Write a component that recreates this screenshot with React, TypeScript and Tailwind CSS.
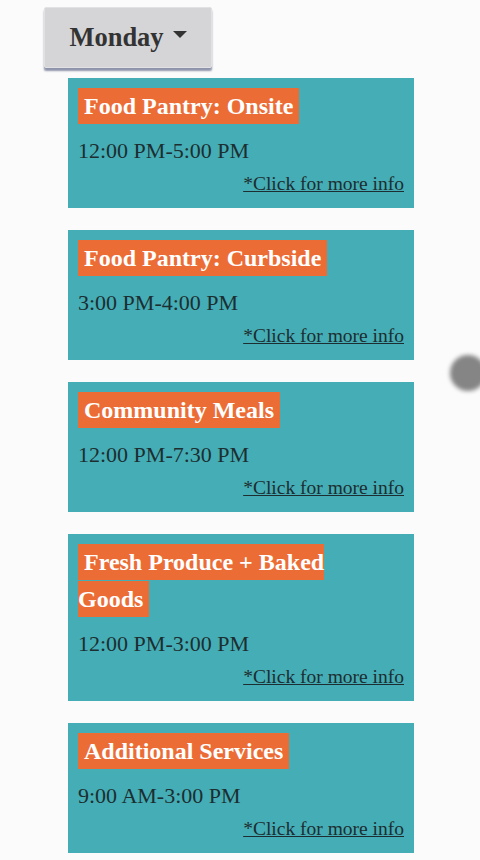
const items = [
  { title: "Food Pantry: Onsite", time: "12:00 PM-5:00 PM" },
  { title: "Food Pantry: Curbside", time: "3:00 PM-4:00 PM" },
  { title: "Community Meals", time: "12:00 PM-7:30 PM" },
  { title: "Fresh Produce + Baked Goods", time: "12:00 PM-3:00 PM" },
  { title: "Additional Services", time: "9:00 AM-3:00 PM" },
];

function Card({ title, time }: { title: string; time: string }) {
  return (
    <div className="bg-[#45adb5] w-[346px] px-[10px] pt-[10px] pb-[8px]">
      <h3 className="max-w-[290px] text-[24px] leading-[37px] font-bold text-white">
        <span className="bg-[#ec6c36] px-[6px] py-[5px]">{title}</span>
      </h3>
      <p className="mt-[11px] text-[22px] leading-[30px] text-[#1c2e31]">{time}</p>
      <p className="mt-[2px] text-right text-[19.5px] leading-[32px]">
        <a href="#" className="underline text-[#1c2e31]">*Click for more info</a>
      </p>
    </div>
  );
}

export default function App() {
  return (
    <div className="relative min-h-[860px] overflow-hidden bg-[#fbfbfb] font-[Liberation_Serif,serif] pt-[7px]">
      <button className="ml-[44px] flex items-center gap-[9px] h-[61px] w-[168px] justify-center bg-[#d5d5d7] border border-[#e2e2e4] rounded-[2px] shadow-[0_3px_2px_#8d93aa] text-[26.5px] font-bold text-[#333]">
        Monday
        <svg width="14" height="7" viewBox="0 0 14 7" className="mb-[7px]">
          <path d="M0 0h14L7 7z" fill="#333" />
        </svg>
      </button>
      <div className="ml-[68px] mt-[10px] flex flex-col gap-[22px]">
        {items.map((it) => (
          <Card key={it.title} {...it} />
        ))}
      </div>
      <div className="absolute left-[450px] top-[355px] w-[36px] h-[36px] rounded-full bg-[#858585] blur-[2px]" />
    </div>
  );
}
